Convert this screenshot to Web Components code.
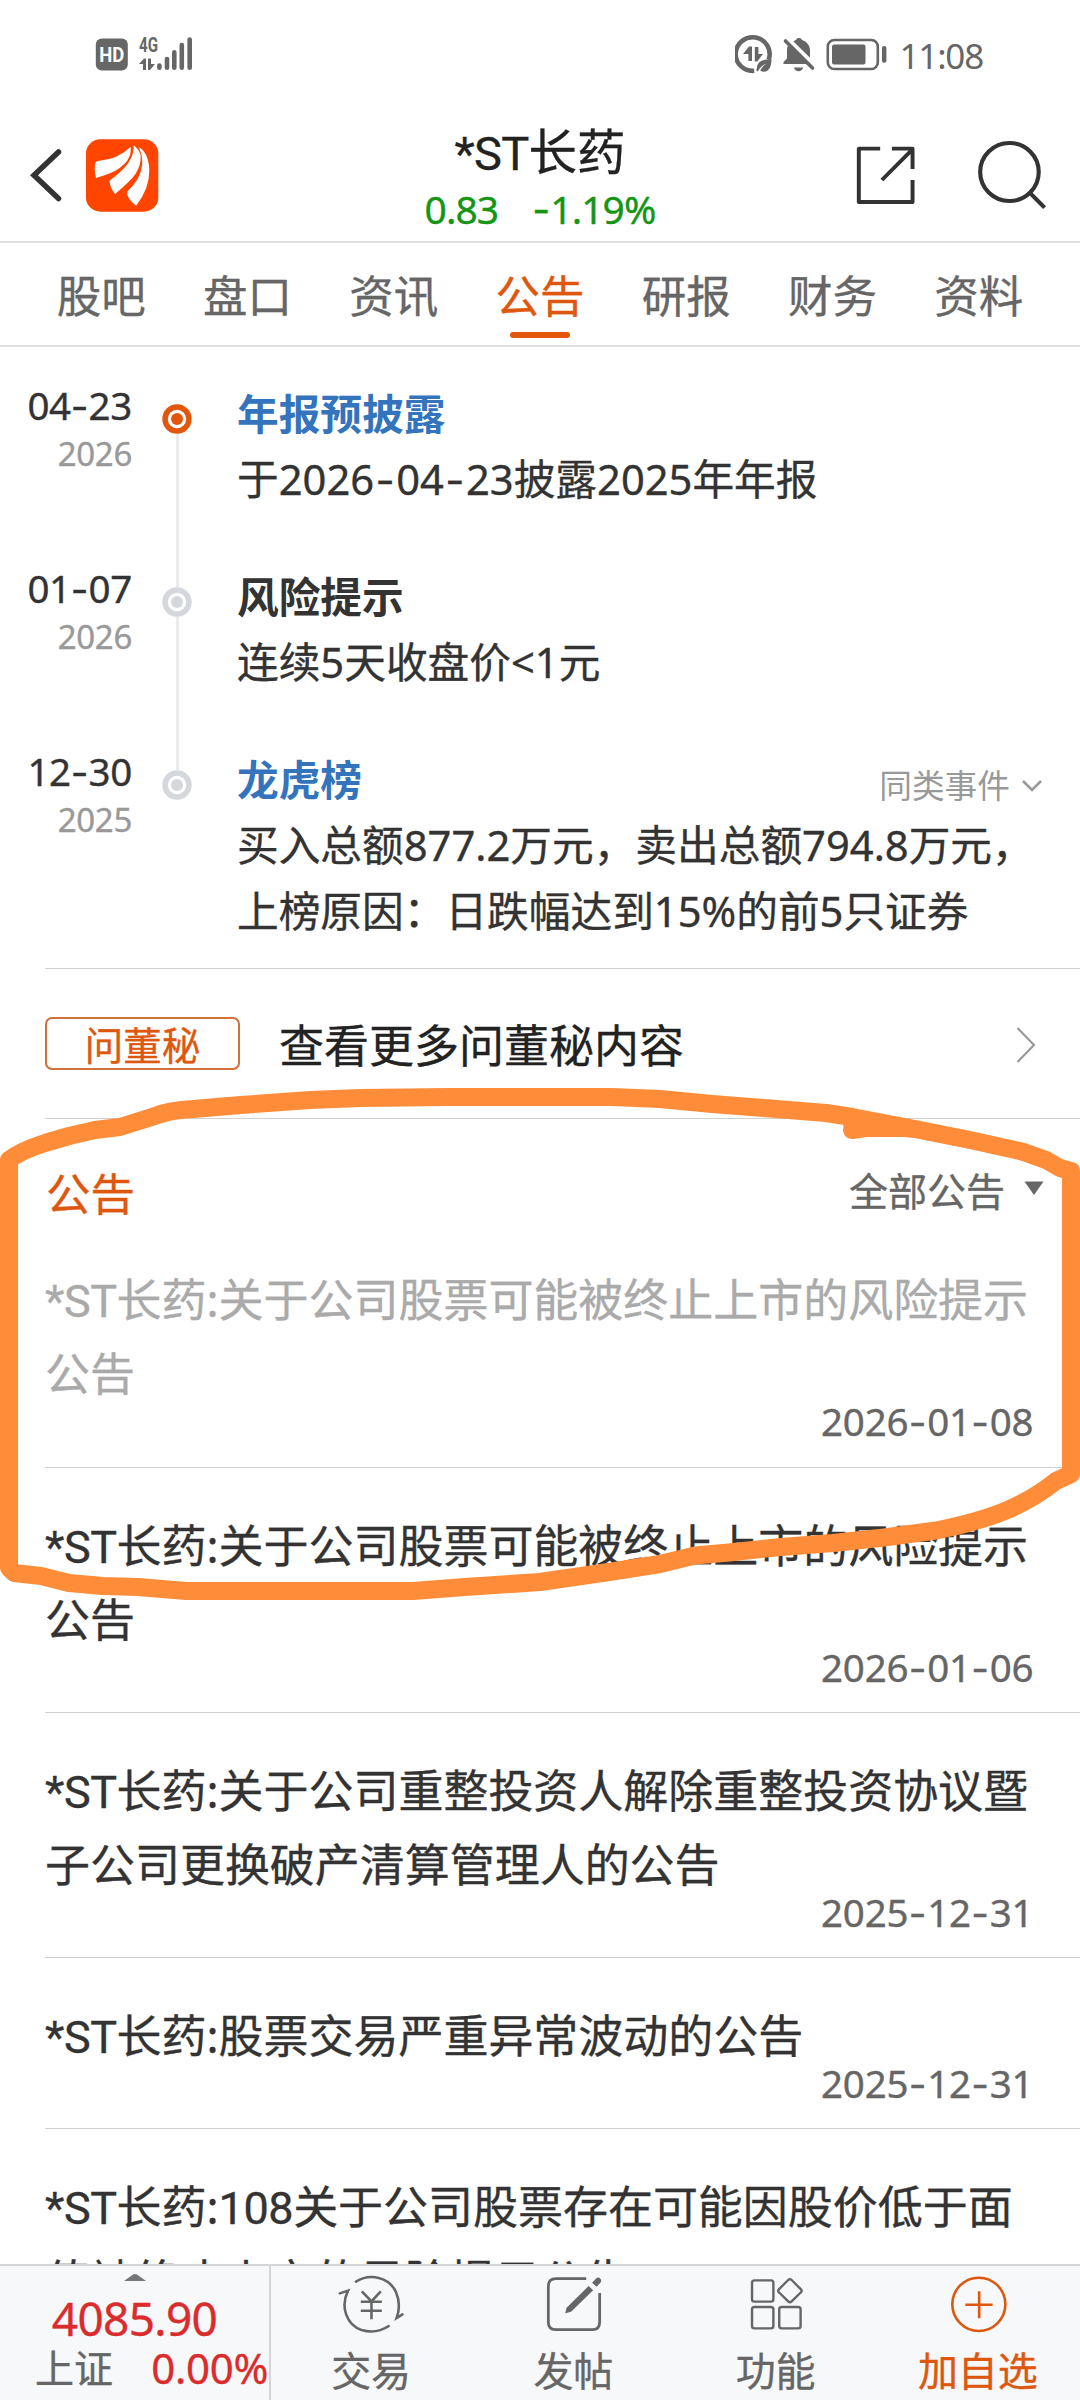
<!DOCTYPE html>
<html lang="zh-CN">
<head>
<meta charset="utf-8">
<title>*ST长药 公告</title>
<style>
html,body{margin:0;padding:0;background:#fff}
body{width:1080px;height:2400px;overflow:hidden;font-family:"Noto Sans","Noto Sans CJK SC",sans-serif;color:#333}
</style>
</head>
<body>
<stock-app></stock-app>
<script>
const SHARED = `<style>
*{box-sizing:border-box}
:host{-webkit-text-stroke:.35px currentColor}
svg{display:block;flex:none;-webkit-text-stroke:0}
.d{font-family:Inter,sans-serif;line-height:0;margin:0 .035em;font-style:normal;letter-spacing:0}
.l{font-family:Roboto,sans-serif;line-height:0;font-weight:400;letter-spacing:-.01em}
</style>`;
// Hyphens use a wider dash glyph, stock prefixes use the narrower Latin face.
const fmt = s => s.replace(/-/g,'<i class="d">-</i>').replace(/\*ST|108/g,m=>`<b class="l">${m}</b>`);
class Base extends HTMLElement{
  connectedCallback(){
    if(this.shadowRoot) return;
    this.attachShadow({mode:'open'}).innerHTML = SHARED + this.render();
  }
  a(n){return this.getAttribute(n)||''}
}
const define=(n,render)=>customElements.define(n,class extends Base{render(){return render(this)}});

define('status-bar',()=>`<style>
:host{display:flex;height:108px;padding:34px 97px 0 95px;justify-content:space-between;align-items:flex-start}
.r{display:flex}.t{font-size:35px;line-height:44px;color:#666;letter-spacing:-1.2px;-webkit-text-stroke:0}
</style>
<svg width="100" height="42" viewBox="95 34 100 42" fill="#666">
<rect x="95.8" y="38.4" width="32" height="32.2" rx="6"/>
<text x="99.3" y="62" fill="#fff" font-family="Roboto" font-weight="700" font-size="20" textLength="25" lengthAdjust="spacingAndGlyphs">HD</text>
<text x="139" y="52" font-family="Roboto" font-weight="700" font-size="20.5" textLength="19" lengthAdjust="spacingAndGlyphs">4G</text>
<path d="M139 64l5-5.5h2V70h-3v-6zM148 58.5h3V64h4l-5 6h-2z"/>
<g stroke="#666" stroke-width="4.6" stroke-linecap="round"><path d="M159.4 65.6V67.8M167 59V67.8M174.3 52.3V67.8M181.8 45V67.8M189.7 39.6V67.8"/></g>
</svg>
<div class="r">
<svg width="165" height="42" viewBox="735 34 165 42" fill="#666">
<path d="M769 60A17 16.8 0 1 0 754.500 71.200" fill="none" stroke="#666" stroke-width="4.600" transform="translate(-.3,-.4)"/>
<path d="M743 54l6-7.500h3V61h-3.600v-7zM754.800 47h3.600v7h4.600l-5.800 7.500h-2.400z"/>
<path d="M771.500 59c-8 .5-14 2-14.500 8.500l-.8 3 1.600 1 1.700-2.800c2-2.700 4-4 7-5.200-3 2-5 4-6.300 7.300C768 74 771.500 68 771.500 59z"/>
<path d="M789 44l20.500 20H783.500v-2l3.500-3.600V50c0-2.500.8-4.500 2-6z"/><path d="M792.500 42c1.500-1.200 3-1.800 3.500-2 1-2.600 5-2.600 6 0 5 1.500 8 5.500 8 10.500V58z"/><path d="M794 67.500h9c-1 5-8 5-9 0z"/>
<path d="M786 41l27 27" stroke="#fff" stroke-width="3" transform="translate(2.500,-2.500)"/><path d="M785.500 41l27 27" stroke="#666" stroke-width="3.600" stroke-linecap="round"/>
<rect x="827.800" y="40" width="50" height="29" rx="6.500" fill="none" stroke="#666" stroke-width="2.600"/><rect x="832" y="44.500" width="33.500" height="20" rx="2"/><rect x="882" y="46" width="4.400" height="16.700" rx="2"/>
</svg><span class="t">11:08</span></div>`);

define('app-header',()=>`<style>
:host{display:grid;grid-template-columns:280px 1fr 280px;height:135px;border-bottom:2px solid #dfe0e2;box-sizing:border-box}
.left{display:flex;padding:31px 0 0 30px;gap:24px}
.mid{display:flex;flex-direction:column;align-items:center;padding-top:14px}
h1{margin:0;font-weight:400;font-size:48.500px;line-height:58px;color:#222}
h1 .l{font-size:47px;letter-spacing:-.8px}
.p{font-size:39px;line-height:52px;color:#149614;margin-top:3px;display:flex;gap:34px;letter-spacing:-.9px}
.p .d{margin:0}
.right{display:flex;padding:28px 0 0 54px;gap:59px}
.right svg+svg{margin-top:2px}
</style>
<div class="left"><svg width="32" height="72" viewBox="30 139 32 72"><path d="M58.500 152L34 175.200l24.500 23.300" fill="none" stroke="#333" stroke-width="5.500" stroke-linecap="round" stroke-linejoin="miter"/></svg>
<svg width="73" height="73" viewBox="249 417 211 219" preserveAspectRatio="none"><rect x="249" y="418" width="209" height="217" rx="42" fill="#ff4500"/><g fill="#fff">
<path d="M276 489Q277 484 284 483Q343 477 378 440Q381 461 368 482Q351 505 320 519Q304 526 278 534Q272 510 276 489Z"/>
<path d="M387 436Q402 448 407 466Q409 495 392 522Q379 542 333 582Q318 563 317 542Q365 507 379 475Q387 459 387 436Z"/>
<path d="M401 441Q430 458 432 510Q433 565 394 617Q366 595 368 575Q407 539 411 496Q414 467 401 441Z"/></g></svg></div>
<div class="mid"><h1>${fmt('*ST长药')}</h1><div class="p"><span>0.83</span><span>${fmt('-1.19%')}</span></div></div>
<div class="right"><svg width="62" height="72" viewBox="914 408 180 216" preserveAspectRatio="none" fill="none" stroke="#333" stroke-width="11.500" stroke-linejoin="round"><path d="M990 446H928V606H1084V540M1024 446H1084V507M995 540L1083 449"/></svg>
<svg width="72" height="72" viewBox="1263 414 209 216" preserveAspectRatio="none" fill="none" stroke="#333" stroke-width="12"><ellipse cx="1363" cy="516" rx="85" ry="87"/><path d="M1421 577L1465 623"/></svg></div>`);

define('nav-tabs',()=>`<style>
:host{display:flex;height:104px;padding:0 28px;border-bottom:2px solid #dfe0e2;box-sizing:border-box}
.t{flex:1;display:flex;flex-direction:column;align-items:center;font-size:44.500px;line-height:64px;padding-top:21px;color:#666}
.on{color:#de570f}.on:after{content:"";width:60px;height:6px;border-radius:3px;background:#e2570c;margin-top:4px}
</style>${['股吧','盘口','资讯','公告','研报','财务','资料'].map((t,i)=>`<div class="t${i==3?' on':''}">${t}</div>`).join('')}`);

define('timeline-event',e=>`<style>
:host{display:flex;height:${e.hasAttribute('last')?256:183}px}
.date{width:132px;text-align:right;padding-top:9px;flex:none;font-size:38.500px;line-height:40px;color:#333;white-space:nowrap;letter-spacing:-.3px}
.date .d{margin:0}
.y{font-size:33px;line-height:36px;color:#999;margin-top:11px}
.rail{width:105px;flex:none;display:flex;flex-direction:column;align-items:center;padding-right:15px}
.line{width:3px;background:#ebebeb}.a{height:28px}.b{flex:1}.none{background:none}
.body{flex:1;font-size:41.700px}
.h{display:flex;justify-content:space-between;line-height:66px;font-weight:700;color:${e.a('color')||'#333'};padding-top:5px;height:70px;-webkit-text-stroke:0}
.x{line-height:66.500px;color:#333;white-space:nowrap}
.more{display:flex;font-size:32.700px;font-weight:400;color:#999;gap:11px;padding-right:37px;align-items:center;padding-top:14px}
</style><div class="date">${fmt(e.a('day'))}<div class="y">${e.a('year')}</div></div>
<div class="rail"><div class="line a ${e.hasAttribute('first')?'none':''}"></div><svg width="30" height="30" viewBox="0 0 30 30" fill="${e.hasAttribute('first')?'#e2570c':'#d4d7dc'}"><circle cx="15" cy="15" r="14.700"/><circle cx="15" cy="15" r="9.200" fill="#fff"/><circle cx="15" cy="15" r="6"/></svg><div class="line b ${e.hasAttribute('last')?'none':''}"></div></div>
<div class="body"><div class="h"><span>${e.a('name')}</span>${e.hasAttribute('last')?'<span class="more">同类事件<svg width="22" height="14" viewBox="0 0 22 14"><path d="M2 2l9 9 9-9" fill="none" stroke="#999" stroke-width="2.600"/></svg></span>':''}</div>
<div class="x">${fmt(e.a('text')).replace('|','<br>')}</div></div>`);

define('ask-row',()=>`<style>
:host{display:flex;align-items:center;height:151px;margin-left:45px;border-top:1px solid #d0d0d0;border-bottom:1px solid #d0d0d0;box-sizing:border-box;padding:2px 44px 0 0}
.tag{width:195px;height:53px;border:2px solid #d2703a;border-radius:7px;color:#de570f;font-size:38.500px;line-height:53px;text-align:center;margin-top:-2px}
.t{font-size:45px;line-height:60px;color:#222;margin-left:39px;flex:1;margin-top:2px}
</style><div class="tag">问董秘</div><div class="t">查看更多问董秘内容</div>
<svg width="20" height="36" viewBox="0 0 20 36"><path d="M1.500 1L18 18 1.500 35" fill="none" stroke="#999" stroke-width="2.200"/></svg>`);

define('list-head',()=>`<style>
:host{display:flex;align-items:center;height:101px;padding:48px 36px 0 46px;justify-content:space-between}
.a{font-size:44.500px;line-height:56px;color:#de570f}.b{font-size:39px;line-height:56px;color:#666;display:flex;gap:19px;align-items:center;margin-top:-6px}
svg{margin-top:-6px}
</style><div class="a">公告</div><div class="b"><span>全部公告</span><svg width="20" height="14" viewBox="0 0 20 14"><path d="M.5.500h19L10 14z" fill="#666"/></svg></div>`);

define('notice-item',e=>`<style>
:host{display:block;margin-left:45px;border-bottom:1px solid #d0d0d0;box-sizing:border-box;height:${e.a('h')}px;padding-top:${e.a('pt')||41}px;flex:none}
.t{font-size:45px;line-height:74px;color:${e.a('color')||'#333'};white-space:nowrap;letter-spacing:-.03px}
.d8{font-size:38.500px;line-height:40px;margin-top:-10px;color:#666;padding-left:776px;white-space:nowrap;letter-spacing:-.2px}
.d8 .d{margin:0 .015em}
</style><div class="t">${fmt(e.a('text')).replace('|','<br>')}</div>${e.a('date')?`<div class="d8">${fmt(e.a('date'))}</div>`:''}`);

define('bottom-bar',()=>{
const cell=(t,s,c)=>`<div class="c" style="color:${c||'#666'}">${s}<span>${t}</span></div>`;
const g=v=>`<svg width="72" height="62" viewBox="${v}" preserveAspectRatio="none" fill="none" stroke="currentColor" `;
return `<style>
:host{display:flex;height:136px;flex:none;background:#f7f8fa;border-top:2px solid #d3d5d8;box-sizing:border-box;position:relative}
.i{width:271px;border-right:2px solid #d3d5d8;display:flex;flex-direction:column;align-items:center;padding-top:8px;color:#da2c2c}
.n{font-size:46px;line-height:48px;margin-top:13px;letter-spacing:-.7px}
.q{display:flex;width:100%;padding:0 0 0 35px;font-size:39px;line-height:48px;justify-content:space-between;margin-top:2px;white-space:nowrap}
.q span:first-child{color:#666}.q span:last-child{letter-spacing:-.3px;padding-right:1px;font-size:42px}
.c{flex:1;display:flex;flex-direction:column;align-items:center;padding-top:7px;font-size:40px;line-height:56px}
.c span{margin-top:8px;margin-left:-2px}
</style><div class="i"><svg width="22" height="7" viewBox="0 0 22 7"><path d="M0 7L9 .600q2-1 4 0L22 7z" fill="#777"/></svg><div class="n">4085.90</div><div class="q"><span>上证</span><span>0.00%</span></div></div>
${cell('交易',g('976 158 209 186')+`stroke-width="7.500"><g stroke-linecap="round"><path d="M1034 184C1075 158 1130 170 1150 215Q1166 253 1152 293L1169 282M987 219L1011 211C987 260 1008 315 1050 329Q1093 342 1129 317"/></g><path d="M1051 213L1079 243L1106 213M1079 243V297M1048 244H1109M1048 271H1109"/></svg>`)}
${cell('发帖',g('-6 158 209 186')+`stroke-width="8"><path d="M134 175H46Q24 175 24 197V306Q24 328 46 328H152Q173 328 173 306V218"/><g fill="currentColor" stroke="none"><path d="M141 197L154 210 90 274 73 279 77 262z"/><path d="M151 187L162 175Q169 168 175 175 180 180 175 187L164 199z"/></g></svg>`)}
${cell('功能',g('583 158 209 186')+`stroke-width="7"><rect x="615" y="180" width="62" height="64" rx="7"/><rect x="615" y="260" width="62" height="64" rx="7"/><rect x="694" y="260" width="62" height="64" rx="7"/><path d="M720 179Q725 174 730 179L757 207Q761 211 757 216L730 243Q725 248 720 243L693 216Q689 211 693 207Z"/></svg>`)}
${cell('加自选',g('1168 158 209 186')+`stroke-width="7.500"><ellipse cx="1272" cy="252" rx="77" ry="80"/><path d="M1233 253H1312M1273 213V294"/></svg>`,'#de570f')}`});

// Hand-drawn marker line lying over the announcement list.
define('marker-stroke',()=>`<style>:host{position:absolute;left:0;top:0;width:1080px;height:2400px;pointer-events:none}</style>
<svg width="1080" height="2400" viewBox="0 0 1080 2400" fill="none" stroke="#ff8c39" stroke-width="18" stroke-linecap="round" stroke-linejoin="round">
<path d="M852 1130L866 1128 905 1128 915 1129 970 1140 1022 1151.500 1046 1160 1060 1168 1071 1171V1474L1056 1481Q1032 1500 1005 1511T936 1530.500L884 1537.500 833 1543 781 1547 729 1552.500 695 1555.500 660 1564 609 1572 540 1582 465 1587 413 1591H186L138 1587 103 1586 69 1583 41 1576 14 1573 9 1568V1160Q20 1151 45 1143L69 1136 95 1130 120 1127 155 1116Q170 1110 193 1109L241 1105 310 1100 361 1098 448 1097H612L660 1099 712 1104 764 1108 826 1113 852 1117 915 1129"/><path d="M852 1123L900 1127"/></svg>`);

define('stock-app',()=>`<style>
:host{display:flex;flex-direction:column;width:1080px;height:2400px;position:relative;overflow:hidden;background:#fff}
main{flex:1;min-height:0;overflow:hidden;display:flex;flex-direction:column}
main>*{flex:none}.tl{padding-top:28.500px;height:621px}
</style><status-bar></status-bar><app-header></app-header><nav-tabs></nav-tabs>
<main><section class="tl">
<timeline-event first day="04-23" year="2026" name="年报预披露" color="#3474bd" text="于2026-04-23披露2025年年报"></timeline-event>
<timeline-event day="01-07" year="2026" name="风险提示" text="连续5天收盘价&lt;1元"></timeline-event>
<timeline-event last day="12-30" year="2025" name="龙虎榜" color="#3474bd" text="买入总额877.2万元，卖出总额794.8万元，|上榜原因：日跌幅达到15%的前5只证券"></timeline-event>
</section><ask-row></ask-row><list-head></list-head>
<notice-item h="248" pt="43" color="#aaa" text="*ST长药:关于公司股票可能被终止上市的风险提示|公告" date="2026-01-08"></notice-item>
<notice-item h="245" text="*ST长药:关于公司股票可能被终止上市的风险提示|公告" date="2026-01-06"></notice-item>
<notice-item h="245" text="*ST长药:关于公司重整投资人解除重整投资协议暨|子公司更换破产清算管理人的公告" date="2025-12-31"></notice-item>
<notice-item h="171" text="*ST长药:股票交易严重异常波动的公告" date="2025-12-31"></notice-item>
<notice-item h="245" text="*ST长药:108关于公司股票存在可能因股价低于面|值被终止上市的风险提示公告" date=""></notice-item>
</main><bottom-bar></bottom-bar><marker-stroke></marker-stroke>`);
</script>
</body>
</html>
